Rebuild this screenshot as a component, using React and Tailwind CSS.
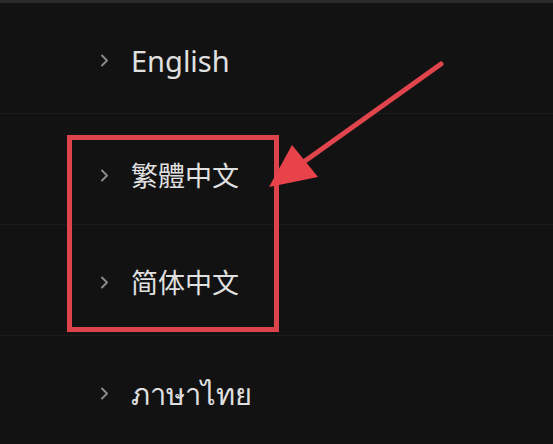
import React from 'react'

const languages = [
    { label: 'English', offset: 'pt-1', size: 'text-[29px]' },
    { label: '繁體中文', offset: 'pt-3', size: 'text-[27px]' },
    { label: '简体中文', offset: 'pt-1', size: 'text-[27px]' },
    { label: 'ภาษาไทย', offset: 'pt-1', size: 'text-[29px]' },
]

const Chevron = () => (
    <svg width="11" height="15" viewBox="0 0 11 15" className="shrink-0">
        <path d="M3 2.5 L8 7.5 L3 12.5" fill="none" stroke="#8c8c8c" strokeWidth="1.9" strokeLinecap="round" strokeLinejoin="round" />
    </svg>
)

const App = () => {
    return (
        <div className="relative w-[553px] h-[444px] overflow-hidden bg-[#121212]" style={{ fontFamily: '"Noto Sans", "Noto Sans CJK TC", "Noto Sans CJK SC", sans-serif' }}>
            <div className="h-[3px] bg-[#2a2a2a]" />
            <div className="flex flex-col">
                {languages.map((lang, i) => (
                    <div
                        key={lang.label}
                        className={`flex items-center gap-[21px] pl-[99px] h-[111px] ${lang.offset} ${i < languages.length - 1 ? 'border-b border-[#1c1c1c]' : ''}`}
                    >
                        <Chevron />
                        <span className={`${lang.size} leading-none text-[#e0e0e0]`}>{lang.label}</span>
                    </div>
                ))}
            </div>

            {/* annotation: highlight box */}
            <div className="absolute left-[67px] top-[135px] w-[212px] h-[197px] border-[5px] border-[#dc434b]" />

            {/* annotation: arrow */}
            <svg className="absolute inset-0 pointer-events-none" width="553" height="444" viewBox="0 0 553 444">
                <line x1="441" y1="64" x2="298" y2="166" stroke="#e0444c" strokeWidth="5" strokeLinecap="round" />
                <polygon points="269,187 292,145 318,177" fill="#e8424b" />
            </svg>
        </div>
    )
}

export default App
